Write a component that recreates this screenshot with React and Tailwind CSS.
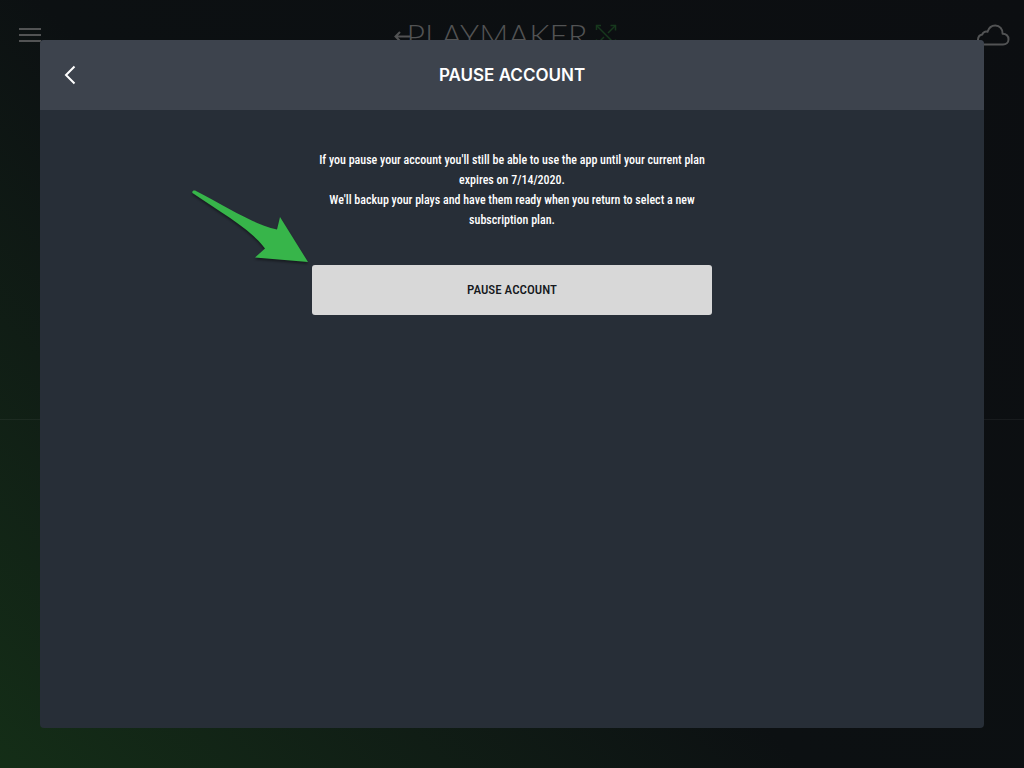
import { useState } from 'react';

function CloudIcon() {
  return (
    <svg width="34" height="22" viewBox="0 0 34 22" fill="none" stroke="currentColor" strokeWidth="2" strokeLinejoin="round" aria-hidden="true">
      <path d="M7 20.500 C3.800 20.500 2 18.200 2 15.800 C2 12.800 4 11 6.300 10.500 C6.800 8.300 9.200 7 11.500 7.800 C12.600 4.200 15.500 1.500 19.300 1.500 C23.700 1.500 26.800 5 26.600 9.800 C30.200 9.700 32.500 12 32.500 15.200 C32.500 18.300 30.200 20.500 27 20.500 Z" />
    </svg>
  );
}

function PlayDiagramIcon() {
  return (
    <svg width="22" height="22" viewBox="0 0 22 22" fill="none" stroke="currentColor" strokeWidth="1.5" aria-hidden="true">
      <path d="M1.500 1.500 L20.500 20.500 M20 2 L13 9 M9 13 L1.500 20.500" />
      <path d="M1.500 6 V1.500 H6 M15.500 1.500 H20.500 V6.500 M1.500 15.500 V20.500 H6.500 M15.500 20.500 H20.500 V15.500" />
    </svg>
  );
}

function Logo() {
  return (
    <div className="flex items-center pr-3 text-[#525354]">
      <svg width="16" height="14" viewBox="0 0 16 14" fill="none" stroke="currentColor" strokeWidth="2" className="-mr-1" aria-hidden="true">
        <path d="M16 8.500 H2 M6 4 L1.500 8.500 L6 13" />
      </svg>
      <span className="font-[Lato,sans-serif] text-[32px] leading-8 font-light">PLAYMAKER</span>
      <span className="ml-2 text-[#17381d]">
        <PlayDiagramIcon />
      </span>
    </div>
  );
}

function PointerArrow() {
  return (
    <svg
      width="120"
      height="80"
      viewBox="0 0 120 80"
      className="absolute right-full bottom-full -mb-px overflow-visible drop-shadow-[0_2px_1px_rgba(0,0,0,0.4)]"
      aria-hidden="true"
    >
      <path
        d="M0.500 7 C-0.500 5 2 4 4 5 C30 18 62 39 85 43.500 L88 31 L116 76 L63 71.500 L73 62.500 C60 44 28 26 0.500 7 Z"
        fill="#37b54a"
      />
    </svg>
  );
}

export default function App() {
  const [paused, setPaused] = useState(false);

  return (
    <div className="min-h-screen flex flex-col bg-linear-45 from-[#142e17] via-[#0c1012] via-45% to-[#0c0e11]">
      <header className="h-[70px] grid grid-cols-3 items-center px-4">
        <button type="button" aria-label="Menu" className="w-7 px-[3px] flex flex-col gap-1 text-[#525354]">
          <span className="h-0.5 bg-current"></span>
          <span className="h-0.5 bg-current"></span>
          <span className="h-0.5 bg-current"></span>
        </button>
        <div className="flex justify-center">
          <Logo />
        </div>
        <button type="button" aria-label="Cloud sync" className="justify-self-end -mr-0.5 text-[#525354]">
          <CloudIcon />
        </button>
      </header>
      <div className="flex-1"></div>
      <div className="flex-1 border-t border-white/5"></div>

      {/* Pause account modal */}
      <div className="fixed inset-0 p-10 flex">
        <section
          role="dialog"
          aria-labelledby="pause-title"
          className="flex-1 flex flex-col rounded-sm bg-[#272e37]"
        >
          <div className="h-[70px] shrink-0 grid grid-cols-[60px_1fr_60px] items-center rounded-t-sm bg-[#3d434d]">
            <button type="button" aria-label="Back" className="h-full flex items-center justify-center text-white">
              <svg width="12" height="20" viewBox="0 0 12 20" fill="none" stroke="currentColor" strokeWidth="2" aria-hidden="true">
                <path d="M10.500 1.500 L2 10 L10.500 18.500" />
              </svg>
            </button>
            <h1 id="pause-title" className="text-center font-[Inter,sans-serif] text-[17px] leading-6 font-semibold text-white">
              PAUSE ACCOUNT
            </h1>
          </div>

          <div className="w-full max-w-[400px] mx-auto pt-10 flex flex-col gap-[35px]">
            <p className="text-center font-['Roboto_Condensed',Roboto,sans-serif] text-xs leading-5 font-medium text-white">
              If you pause your account you'll still be able to use the app until your current plan
              expires on 7/14/2020.
              <br />
              We'll backup your plays and have them ready when you return to select a new
              subscription plan.
            </p>
            <div className="relative">
              <PointerArrow />
              <button
                type="button"
                disabled={paused}
                onClick={() => setPaused(true)}
                className="w-full h-[50px] rounded-[3px] bg-[#d8d8d8] font-['Roboto_Condensed',Roboto,sans-serif] text-[13px] leading-5 font-medium text-[#16191d]"
              >
                PAUSE ACCOUNT
              </button>
            </div>
          </div>
        </section>
      </div>
    </div>
  );
}
